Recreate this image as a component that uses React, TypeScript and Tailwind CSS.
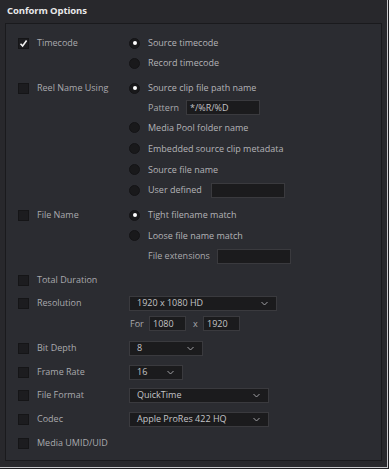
import React from 'react'

const font = { fontFamily: '"Open Sans", "Liberation Sans", sans-serif' }

function Check({ on = false }: { on?: boolean }) {
  return (
    <div className="w-[11px] h-[11px] shrink-0 bg-[#1c1c1f] border border-[#151517] flex items-center justify-center">
      {on && (
        <svg width="9" height="9" viewBox="0 0 9 9">
          <path d="M1.5 4.8 L3.6 7 L7.6 1.6" fill="none" stroke="#f2f2f2" strokeWidth="1.6" />
        </svg>
      )}
    </div>
  )
}

function Radio({ on = false }: { on?: boolean }) {
  return (
    <div className="w-[11px] h-[11px] shrink-0 rounded-full bg-[#19191b] border border-[#141416] flex items-center justify-center">
      {on && <div className="w-[4px] h-[4px] rounded-full bg-white" />}
    </div>
  )
}

function Left({ label, on }: { label?: string; on?: boolean }) {
  return (
    <div className="w-[111px] shrink-0 flex items-center gap-[8px]">
      {label && (
        <>
          <Check on={on} />
          <span className="text-[#a9a9ad]">{label}</span>
        </>
      )}
    </div>
  )
}

function Opt({ label, on, w }: { label: string; on?: boolean; w?: string }) {
  return (
    <div className="flex items-center gap-[8px]">
      <Radio on={on} />
      <span className={`text-[#b3b3b7] ${w ?? ''}`}>{label}</span>
    </div>
  )
}

function Field({ w, value }: { w: string; value?: string }) {
  return (
    <div className={`${w} h-[15px] bg-[#1b1b1d] border border-[#3a3a3e] flex items-center px-[3px] text-[#c4c4c7]`}>
      {value}
    </div>
  )
}

function Select({ w, value }: { w: string; value: string }) {
  return (
    <div className={`${w} h-[15px] bg-[#1b1b1d] border border-[#3a3a3e] flex items-center justify-between pl-[7px] pr-[8px] text-[#c4c4c7]`}>
      <span>{value}</span>
      <svg width="7" height="5" viewBox="0 0 7 5">
        <path d="M0.5 1 L3.5 4 L6.5 1" fill="none" stroke="#a0a0a4" strokeWidth="1" />
      </svg>
    </div>
  )
}

export default function App() {
  return (
    <div className="w-[389px] h-[469px] bg-[#1f1f22]" style={font}>
      <div className="w-[387px] h-[467px] bg-[#28282c] border-r border-b border-[#c9c9cc] box-content">
        <div className="h-[23px] pl-[7px] pt-[4px] text-[9.5px] font-bold tracking-[-0.1px] text-[#e8e8ea]">Conform Options</div>
        <div className="mx-[5px] h-[438px] bg-[#2b2c31] border border-[#1a1a1d] pl-[12px] pt-[9px] text-[9px]">
          {/* Timecode */}
          <div className="flex items-center h-[20px]">
            <Left label="Timecode" on />
            <Opt label="Source timecode" on />
          </div>
          <div className="flex items-center h-[20px]">
            <Left />
            <Opt label="Record timecode" />
          </div>

          {/* Reel name */}
          <div className="flex items-center h-[20px] mt-[5px]">
            <Left label="Reel Name Using" />
            <Opt label="Source clip file path name" on />
          </div>
          <div className="flex items-center h-[19px]">
            <Left />
            <div className="w-[19px]" />
            <span className="text-[#a9a9ad] w-[38px]">Pattern</span>
            <Field w="w-[74px]" value="*/%R/%D" />
          </div>
          <div className="flex items-center h-[21px]">
            <Left />
            <Opt label="Media Pool folder name" />
          </div>
          <div className="flex items-center h-[21px]">
            <Left />
            <Opt label="Embedded source clip metadata" />
          </div>
          <div className="flex items-center h-[21px]">
            <Left />
            <Opt label="Source file name" />
          </div>
          <div className="flex items-center h-[20px]">
            <Left />
            <Opt label="User defined" w="w-[63px]" />
            <Field w="w-[74px]" />
          </div>

          {/* File name */}
          <div className="flex items-center h-[20px] mt-[5px]">
            <Left label="File Name" />
            <Opt label="Tight filename match" on />
          </div>
          <div className="flex items-center h-[21px]">
            <Left />
            <Opt label="Loose file name match" />
          </div>
          <div className="flex items-center h-[20px]">
            <Left />
            <div className="w-[19px]" />
            <span className="text-[#a9a9ad] w-[69px]">File extensions</span>
            <Field w="w-[74px]" />
          </div>

          <div className="flex items-center h-[20px] mt-[4px]">
            <Left label="Total Duration" />
          </div>

          {/* Resolution */}
          <div className="flex items-center h-[20px] mt-[3px]">
            <Left label="Resolution" />
            <Select w="w-[148px]" value="1920 x 1080 HD" />
          </div>
          <div className="flex items-center h-[21px]">
            <Left />
            <span className="text-[#a9a9ad] w-[20px] pl-[1px]">For</span>
            <Field w="w-[37px]" value="1080" />
            <span className="text-[#a9a9ad] w-[17px] pl-[7px]">x</span>
            <Field w="w-[37px]" value="1920" />
          </div>

          <div className="flex items-center h-[20px] mt-[4px]">
            <Left label="Bit Depth" />
            <Select w="w-[74px]" value="8" />
          </div>
          <div className="flex items-center h-[20px] mt-[4px]">
            <Left label="Frame Rate" />
            <Select w="w-[54px]" value="16" />
          </div>
          <div className="flex items-center h-[20px] mt-[3px]">
            <Left label="File Format" />
            <Select w="w-[140px]" value="QuickTime" />
          </div>
          <div className="flex items-center h-[20px] mt-[4px]">
            <Left label="Codec" />
            <Select w="w-[140px]" value="Apple ProRes 422 HQ" />
          </div>
          <div className="flex items-center h-[20px] mt-[4px]">
            <Left label="Media UMID/UID" />
          </div>
        </div>
      </div>
    </div>
  )
}
